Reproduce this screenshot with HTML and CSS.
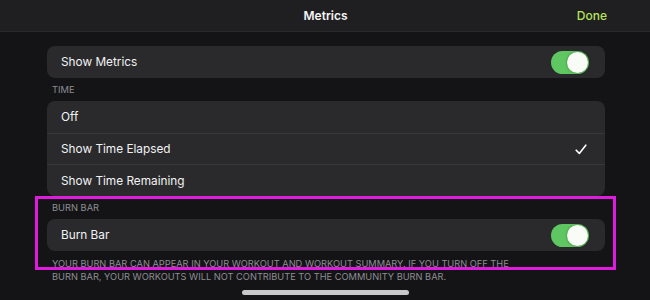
FILE: index.html
```html
<!DOCTYPE html>
<html lang="en">
<head>
<meta charset="utf-8">
<title>Metrics</title>
<link rel="stylesheet" href="styles.css">
</head>
<body>
<div class="screen">
  <header class="nav">
    <span class="nav-side"></span>
    <span class="nav-title">Metrics</span>
    <span class="nav-done">Done</span>
  </header>
  <main class="content">
    <div class="card row">
      <span class="label">Show Metrics</span>
      <span class="toggle on"><span class="knob"></span></span>
    </div>
    <div class="section-label">TIME</div>
    <div class="card group">
      <div class="row item"><span class="label">Off</span></div>
      <div class="row item"><span class="label">Show Time Elapsed</span>
        <svg class="check" width="12" height="11" viewBox="0 0 12 11"><path d="M1.2 6.2 L4.3 9.4 L10.8 1.2" fill="none" stroke="#fff" stroke-width="1.6" stroke-linecap="round" stroke-linejoin="round"/></svg>
      </div>
      <div class="row item"><span class="label">Show Time Remaining</span></div>
    </div>
    <div class="section-label">BURN BAR</div>
    <div class="card row">
      <span class="label">Burn Bar</span>
      <span class="toggle on"><span class="knob"></span></span>
    </div>
    <p class="footnote">YOUR BURN BAR CAN APPEAR IN YOUR WORKOUT AND WORKOUT SUMMARY. IF YOU TURN OFF THE BURN BAR, YOUR WORKOUTS WILL NOT CONTRIBUTE TO THE COMMUNITY BURN BAR.</p>
  </main>
  <div class="highlight"></div>
  <div class="home-bar"></div>
</div>
</body>
</html>
```
FILE: styles.css
```css
* { box-sizing: border-box; }
html, body { margin: 0; padding: 0; }
body {
  background: #141416;
  font-family: Inter, "Noto Sans", sans-serif;
  color: #f2f2f4;
}
.screen {
  position: relative;
  width: 650px;
  height: 300px;
  overflow: hidden;
  background: #141416;
}
.nav {
  height: 32px;
  background: #1f1f21;
  border-bottom: 1px solid #29292b;
  display: grid;
  grid-template-columns: 1fr auto 1fr;
  align-items: center;
  padding: 0 43px 0 43px;
}
.nav-title {
  font-size: 12px;
  font-weight: 600;
  color: #f4f4f6;
  padding-left: 1px;
}
.nav-done {
  justify-self: end;
  font-size: 12px;
  font-weight: 500;
  color: #b6e35c;
}
.content {
  padding: 14px 45px 0 47px;
}
.card {
  background: #2a2a2d;
  border-radius: 8px;
}
.row {
  height: 32px;
  display: flex;
  align-items: center;
  justify-content: space-between;
  padding: 0 16px 0 14px;
}
.label {
  font-size: 11.8px;
  color: #f2f2f4;
}
.section-label {
  height: 23px;
  display: flex;
  align-items: center;
  padding-left: 5px;
  font-size: 9.3px;
  color: #8e8e93;
}
.group .item {
  height: 31.7px;
  padding-right: 18px;
}
.group .item + .item {
  border-top: 1px solid #38383b;
}
.check { display: block; }
.toggle {
  width: 38px;
  height: 23px;
  border-radius: 12px;
  background: #5fc761;
  position: relative;
  display: block;
}
.knob {
  position: absolute;
  top: 1px;
  right: 1px;
  width: 21px;
  height: 21px;
  border-radius: 50%;
  background: #f8fbf6;
  box-shadow: 0 0 3px rgba(0,0,0,0.35);
}
.footnote {
  margin: 7px 0 0 5px;
  width: 480px;
  font-size: 9.25px;
  line-height: 12.5px;
  color: #8e8e93;
}
.highlight {
  position: absolute;
  left: 35px;
  top: 196px;
  width: 581px;
  height: 74px;
  border: 3px solid #e01be0;
  pointer-events: none;
}
.home-bar {
  position: absolute;
  left: 242px;
  top: 290px;
  width: 167px;
  height: 5px;
  border-radius: 3px;
  background: #c9c9cb;
}
```
